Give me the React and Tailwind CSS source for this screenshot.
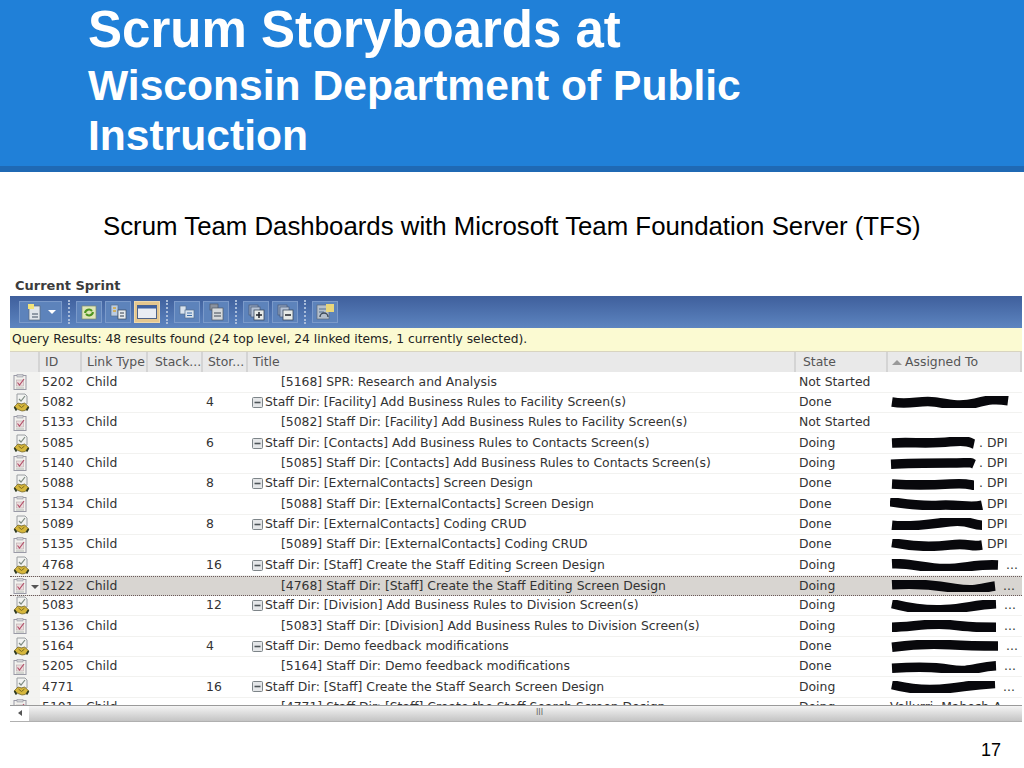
import React from "react";

const rows = [
  { id: "5202", link: "Child", title: "[5168] SPR: Research and Analysis", state: "Not Started" },
  { id: "5082", story: "4", title: "Staff Dir: [Facility] Add Business Rules to Facility Screen(s)", state: "Done", mark: "M2 5 C20 8 30 3 45 5 S70 9 85 6 S105 2 118 4", w: 120 },
  { id: "5133", link: "Child", title: "[5082] Staff Dir: [Facility] Add Business Rules to Facility Screen(s)", state: "Not Started" },
  { id: "5085", story: "6", title: "Staff Dir: [Contacts] Add Business Rules to Contacts Screen(s)", state: "Doing", mark: "M2 5 C20 4 40 6 60 4 S80 5 84 6", w: 86, tail: ". DPI" },
  { id: "5140", link: "Child", title: "[5085] Staff Dir: [Contacts] Add Business Rules to Contacts Screen(s)", state: "Doing", mark: "M1 6 C20 5 40 5 60 5 S80 4 84 6", w: 86, tail: ". DPI" },
  { id: "5088", story: "8", title: "Staff Dir: [ExternalContacts] Screen Design", state: "Done", mark: "M2 5 C20 6 40 6 60 5 S80 6 84 6", w: 86, tail: ". DPI" },
  { id: "5134", link: "Child", title: "[5088] Staff Dir: [ExternalContacts] Screen Design", state: "Done", mark: "M0 3 C15 5 30 7 50 6 S80 9 92 6", w: 94, tail: "DPI" },
  { id: "5089", story: "8", title: "Staff Dir: [ExternalContacts] Coding CRUD", state: "Done", mark: "M2 6 C20 8 40 5 60 3 S80 6 92 6", w: 94, tail: "DPI" },
  { id: "5135", link: "Child", title: "[5089] Staff Dir: [ExternalContacts] Coding CRUD", state: "Done", mark: "M2 3 C20 6 40 7 60 5 S80 7 92 5", w: 94, tail: "DPI" },
  { id: "4768", story: "16", title: "Staff Dir: [Staff] Create the Staff Editing Screen Design", state: "Doing", mark: "M2 4 C20 3 35 8 55 8 S85 4 108 5", w: 110, tail: "..." },
  { id: "5122", link: "Child", title: "[4768] Staff Dir: [Staff] Create the Staff Editing Screen Design", state: "Doing", selected: true, mark: "M2 4 C20 3 45 4 65 7 S90 7 105 5", w: 107, tail: "..." },
  { id: "5083", story: "12", title: "Staff Dir: [Division] Add Business Rules to Division Screen(s)", state: "Doing", mark: "M2 3 C20 7 35 9 55 8 S85 4 106 3", w: 108, tail: "..." },
  { id: "5136", link: "Child", title: "[5083] Staff Dir: [Division] Add Business Rules to Division Screen(s)", state: "Doing", mark: "M2 6 C20 6 40 2 60 4 S85 6 106 6", w: 108, tail: "..." },
  { id: "5164", story: "4", title: "Staff Dir: Demo feedback modifications", state: "Done", mark: "M2 6 C20 4 40 3 60 4 S85 5 108 5", w: 110, tail: "..." },
  { id: "5205", link: "Child", title: "[5164] Staff Dir: Demo feedback modifications", state: "Done", mark: "M2 6 C20 5 40 4 60 7 S85 5 106 4", w: 108, tail: "..." },
  { id: "4771", story: "16", title: "Staff Dir: [Staff] Create the Staff Search Screen Design", state: "Doing", mark: "M2 3 C20 7 40 8 60 6 S85 3 105 2", w: 107, tail: "..." },
  { id: "5101", link: "Child", title: "[4771] Staff Dir: [Staff] Create the Staff Search Screen Design", state: "Doing", assigned: "Vallurri, Mahesh A..." },
];

const TaskIcon = () => (
  <svg width="14" height="16" viewBox="0 0 14 16">
    <rect x="1" y="1.5" width="12" height="14" fill="#f3f2ee" stroke="#9a9aa6" />
    <rect x="4" y="0.5" width="6" height="2.5" fill="#d0d2d4" stroke="#9a9aa6" strokeWidth="0.6" />
    <rect x="3.5" y="6" width="7" height="6" fill="#ecdcdc" stroke="#b8a8ac" strokeWidth="0.6" />
    <path d="M4.5 8.5l2 2.5L11 5" fill="none" stroke="#b4506a" strokeWidth="1.2" />
    <path d="M3 14h8" stroke="#b0b6b0" />
  </svg>
);

const StoryIcon = () => (
  <svg width="17" height="19" viewBox="0 0 17 19">
    <path d="M4 1h8l2 2v8H4z" fill="#f2f3f1" stroke="#9a9ea2" />
    <path d="M6 6l2 2 4-5" fill="none" stroke="#7c8a80" strokeWidth="1.2" />
    <path d="M1 14l4-4 3.5 1 3-1 4.500 4-4 3.500-3 .5-4-1.500z" fill="#d6b73c" stroke="#6a5c20" strokeWidth="0.7" />
    <path d="M5.500 12l3 2.500 3-2.500" fill="none" stroke="#7a6a20" strokeWidth="1" />
    <path d="M1.500 14l2 3.500M15.500 14l-2 3.500" stroke="#2f3a20" strokeWidth="1.8" />
  </svg>
);

const MinusBox = () => (
  <svg width="11" height="11" viewBox="0 0 11 11" className="shrink-0">
    <rect x="0.5" y="0.5" width="10" height="10" rx="1" fill="#e4e6e8" stroke="#7d8488" />
    <path d="M2.500 5.500h6" stroke="#4d5458" strokeWidth="1.600" />
  </svg>
);

const Tool = ({ children, active, wide }) => (
  <div
    className={`h-[22px] flex items-center justify-center border ${wide ? "w-[43px] gap-[5px]" : "w-[26px]"} ${
      active ? "bg-[#e4c78f] border-[#eed9ac]" : "bg-[#5d83bb] border-[#7b9aca]"
    }`}
  >
    {children}
  </div>
);

const Sep = () => <div className="h-[24px] mx-[3px] border-l-2 border-dotted border-[#a9bcda]" />;

const Sheets = ({ sign }) => (
  <svg width="17" height="17" viewBox="0 0 17 17">
    <rect x="1" y="1" width="9" height="10" fill="#8fa3c0" stroke="#4a5a74" strokeWidth="0.7" />
    <rect x="3" y="3" width="9" height="10" fill="#b4c2d6" stroke="#4a5a74" strokeWidth="0.7" />
    <rect x="6" y="6" width="10" height="10" fill="#e6eae8" stroke="#3a4a60" strokeWidth="0.8" />
    <path d={sign === "+" ? "M8 11h6M11 8v6" : "M8 11h6"} stroke="#20242c" strokeWidth="1.500" />
  </svg>
);

const Toolbar = () => (
  <div className="h-[32px] px-[9px] flex items-center gap-[3px] bg-gradient-to-b from-[#3f5f9c] to-[#5d85c0]">
    <Tool wide>
      <svg width="17" height="18" viewBox="0 0 17 18">
        <rect x="3" y="3" width="11" height="14" fill="#dfe5ea" stroke="#5a6a7c" strokeWidth="0.7" />
        <path d="M2 1h6v5H2z" fill="#f2e37a" />
        <path d="M6 11h6M6 14h6" stroke="#3e4e60" />
      </svg>
      <span className="w-0 h-0 border-x-[4px] border-x-transparent border-t-[4px] border-t-white" />
    </Tool>
    <Sep />
    <Tool>
      <svg width="16" height="15" viewBox="0 0 16 15">
        <rect x="1" y="1" width="14" height="13" fill="#dfe6b8" stroke="#7c8a70" strokeWidth="0.7" />
        <path d="M4 8a4 4 0 0 1 7-2M12 7a4 4 0 0 1-7 2" fill="none" stroke="#4c9420" strokeWidth="2" />
      </svg>
    </Tool>
    <Tool>
      <svg width="17" height="16" viewBox="0 0 17 16">
        <rect x="1" y="1" width="7" height="11" fill="#b9cbe2" stroke="#56708f" strokeWidth="0.7" />
        <path d="M3 4h3M3 7h3" stroke="#d6a63a" strokeWidth="1.400" />
        <rect x="8" y="6" width="8" height="9" fill="#e6ebef" stroke="#3a4a60" strokeWidth="0.7" />
        <path d="M10 9h4M10 12h4" stroke="#303c4c" />
      </svg>
    </Tool>
    <Tool active>
      <svg width="20" height="14" viewBox="0 0 20 14">
        <rect x="0.5" y="0.5" width="19" height="13" fill="#e9edf3" stroke="#4e6388" />
        <rect x="0.5" y="0.5" width="19" height="3" fill="#3f62a2" />
      </svg>
    </Tool>
    <Sep />
    <Tool>
      <svg width="16" height="14" viewBox="0 0 16 14">
        <rect x="1" y="1" width="6" height="8" fill="#d9e3ee" stroke="#56708f" strokeWidth="0.7" />
        <rect x="6" y="5" width="9" height="8" fill="#d9e3ee" stroke="#56708f" strokeWidth="0.7" />
        <path d="M8 8h5M8 10.500h5" stroke="#3c6da6" />
      </svg>
    </Tool>
    <Tool>
      <svg width="15" height="18" viewBox="0 0 15 18">
        <rect x="1" y="1" width="8" height="6" fill="#8a929e" stroke="#4e5866" strokeWidth="0.7" />
        <rect x="3" y="5" width="11" height="12" fill="#d6dadc" stroke="#4e5866" strokeWidth="0.7" />
        <path d="M5 10h7M5 13h7" stroke="#3e4854" />
      </svg>
    </Tool>
    <Sep />
    <Tool>
      <Sheets sign="+" />
    </Tool>
    <Tool>
      <Sheets sign="-" />
    </Tool>
    <Sep />
    <Tool>
      <svg width="19" height="18" viewBox="0 0 19 18">
        <rect x="1" y="2" width="12" height="14" fill="#b4bfcb" stroke="#5c6a7a" strokeWidth="0.7" />
        <rect x="10" y="1" width="8" height="8" fill="#e9d67a" />
        <path d="M3 6h7M3 9h5" stroke="#55708f" />
        <path d="M4 14a4 4 0 0 1 8 0" fill="none" stroke="#3d4a58" strokeWidth="1.400" />
      </svg>
    </Tool>
  </div>
);

const Head = ({ className, children }) => (
  <div className={`h-full flex items-center border-r-2 border-[#d4d4d4] ${className}`}>{children}</div>
);

const Row = ({ row }) => (
  <div
    className={`h-[20.33px] flex items-center text-[#333333] ${
      row.selected ? "bg-[#d8d5d1] border-y border-dotted border-[#6b5a5a]" : "border-b border-[#f2f2f0]"
    }`}
  >
    <div className="w-[30px] h-full shrink-0 flex items-center pl-[3px] bg-[#f3f3f1] relative">
      {row.story ? <StoryIcon /> : <TaskIcon />}
      {row.selected && (
        <span className="absolute left-[21px] top-[8px] w-0 h-0 border-x-[4px] border-x-transparent border-t-[4px] border-t-[#555555]" />
      )}
    </div>
    <div className="w-[44px] pl-[2px] shrink-0">{row.id}</div>
    <div className="w-[119px] pl-[2px] shrink-0">{row.link}</div>
    <div className="w-[45px] pl-[3px] shrink-0">{row.story}</div>
    <div className={`w-[548px] shrink-0 flex items-center ${row.story ? "pl-[4px] gap-[2px]" : "pl-[33px]"}`}>
      {row.story && <MinusBox />}
      <span className="whitespace-nowrap">{row.title}</span>
    </div>
    <div className="w-[91px] pl-[3px] shrink-0">{row.state}</div>
    <div className="flex-1 pl-[3px] flex items-center whitespace-nowrap">
      {row.mark && (
        <svg width={row.w} height="12" viewBox={`0 0 ${row.w} 10`} className="shrink-0" preserveAspectRatio="none">
          <path d={row.mark} fill="none" stroke="#08080c" strokeWidth="8" />
        </svg>
      )}
      {row.tail && <span className={row.tail === "..." ? "ml-[6px]" : "ml-[3px]"}>{row.tail}</span>}
      {row.assigned}
    </div>
  </div>
);

const App = () => {
  return (
    <div className="w-[1024px] h-[768px] overflow-hidden bg-white font-['Liberation_Sans',Arial,sans-serif]">
      <header className="h-[172px] bg-[#2080d8] border-b-[6px] border-[#1f69b4] pl-[88px] text-white font-bold">
        <h1 className="text-[51px] leading-[60px]">Scrum Storyboards at</h1>
        <h2 className="text-[42.6px] leading-[50px] w-[700px]">Wisconsin Department of Public Instruction</h2>
      </header>

      <p className="mt-[39px] pl-[103px] text-[25.8px] leading-[30px] text-black">
        Scrum Team Dashboards with Microsoft Team Foundation Server (TFS)
      </p>

      <section className="mt-[34px] ml-[10px] w-[1012px] font-['DejaVu_Sans',Verdana,sans-serif] text-[12.4px]">
        <div className="h-[21px] pl-[5px] flex items-center text-[13px] font-bold text-[#3c3c3c]">Current Sprint</div>
        <Toolbar />
        <div className="h-[23px] pl-[2px] flex items-center bg-[#fbfad2] text-[#222222] text-[12.28px]">
          Query Results: 48 results found (24 top level, 24 linked items, 1 currently selected).
        </div>
        <div className="h-[21.4px] flex items-center bg-[#e9e9e9] text-[#555555] border-t border-[#d8d4c0]">
          <Head className="w-[30px]" />
          <Head className="w-[42px] pl-[5px]">ID</Head>
          <Head className="w-[66px] pl-[5px]">Link Type</Head>
          <Head className="w-[55px] pl-[7px] whitespace-nowrap">Stack...</Head>
          <Head className="w-[45px] pl-[5px] whitespace-nowrap">Stor...</Head>
          <Head className="w-[548px] pl-[5px]">Title</Head>
          <Head className="w-[92px] pl-[7px]">State</Head>
          <Head className="flex-1 pl-[4px] gap-[3px]">
            <span className="w-0 h-0 border-x-[5px] border-x-transparent border-b-[5px] border-b-[#999999]" />
            Assigned To
          </Head>
        </div>
        <div className="h-[333.6px] overflow-hidden border-b border-[#9a9a9a]">
          {rows.map((row) => (
            <Row key={row.id} row={row} />
          ))}
        </div>
        <div className="h-[16px] flex items-center bg-gradient-to-b from-[#f4f4f4] to-[#c4c4c4] border-b border-[#b0b0b0]">
          <div className="w-[19px] h-full bg-white flex items-center justify-center">
            <span className="w-0 h-0 border-y-[3px] border-y-transparent border-r-[4px] border-r-[#555555]" />
          </div>
          <div className="flex-1 pl-[28px] text-center text-[8px] leading-none text-[#666666]">III</div>
        </div>
      </section>

      <div className="mt-[17px] pr-[23px] text-right text-[18px] leading-[22px] text-black">17</div>
    </div>
  );
};

export default App;
